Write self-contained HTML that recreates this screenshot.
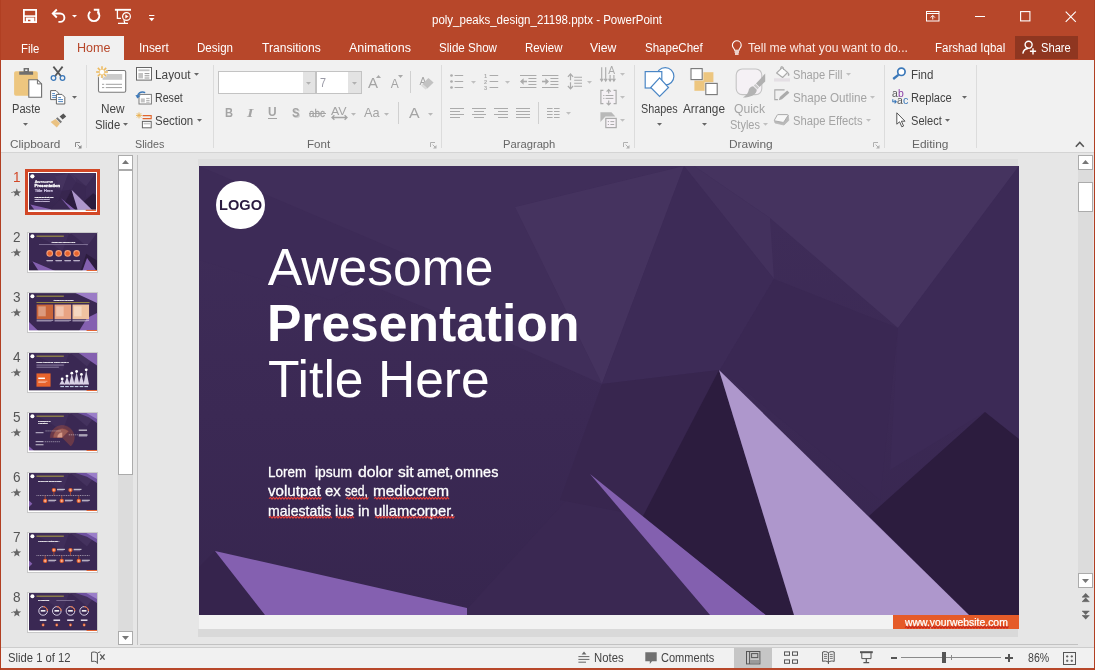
<!DOCTYPE html>
<html>
<head>
<meta charset="utf-8">
<title>PowerPoint</title>
<style>
*{box-sizing:border-box;margin:0;padding:0}
html,body{width:1095px;height:670px;overflow:hidden;background:#e6e6e6;font-family:"Liberation Sans",sans-serif;font-size:12px;color:#444}
#app{position:relative;width:1095px;height:670px;overflow:hidden;background:#e6e6e6;will-change:transform}
svg{display:block;overflow:visible}
</style>
</head>
<body>
<div id="app">
<!-- part_ribbon -->
<div style="position:absolute;left:0px;top:60px;width:1095px;height:92px;background:#f1f1f1;"></div>
<div style="position:absolute;left:0px;top:152px;width:1095px;height:1px;background:#d4d4d4;"></div>
<div style="position:absolute;left:86px;top:65px;width:1px;height:83px;background:#dcdcdc;"></div>
<div style="position:absolute;left:213px;top:65px;width:1px;height:83px;background:#dcdcdc;"></div>
<div style="position:absolute;left:441px;top:65px;width:1px;height:83px;background:#dcdcdc;"></div>
<div style="position:absolute;left:634px;top:65px;width:1px;height:83px;background:#dcdcdc;"></div>
<div style="position:absolute;left:884px;top:65px;width:1px;height:83px;background:#dcdcdc;"></div>
<div style="position:absolute;left:976px;top:65px;width:1px;height:83px;background:#dcdcdc;"></div>
<svg style="position:absolute;left:13px;top:66px;" width="31" height="33" viewBox="0 0 31 33"><rect x="1.1" y="5.3" width="23.7" height="24.5" rx="1.8" fill="#edc67f"/><path d="M6.2 8.8V5.6H10.6V2H16V5.6H20.1V8.8Z" fill="#6f6f6f"/><rect x="12.2" y="3.4" width="2.2" height="1.6" fill="#f1f1f1"/><path d="M15.8 13.7H24.4L28.6 17.9V31.2H15.8Z" fill="#fff" stroke="#6f6f6f" stroke-width="1.1"/><path d="M24.4 13.7V17.9H28.6" fill="none" stroke="#6f6f6f" stroke-width="1"/></svg>
<div style="position:absolute;left:12.20px;top:102.89px;font-size:12.3px;line-height:1;color:#444;white-space:nowrap;transform-origin:0 0;transform:scaleX(0.9029);">Paste</div>
<svg style="position:absolute;left:23.0px;top:123.3px;" width="5" height="2.8" viewBox="0 0 5 2.8"><path d="M0 0H5L2.5 2.8Z" fill="#666"/></svg>
<svg style="position:absolute;left:50px;top:66px;" width="16" height="15" viewBox="0 0 16 15"><path d="M3.4 0.6L11 10.2M12.6 0.6L5 10.2" stroke="#555" stroke-width="1.8" fill="none"/><circle cx="3.5" cy="12" r="2.3" fill="none" stroke="#3b78b9" stroke-width="1.3"/><circle cx="12.5" cy="12" r="2.3" fill="none" stroke="#3b78b9" stroke-width="1.3"/></svg>
<svg style="position:absolute;left:50px;top:89.5px;" width="16" height="15" viewBox="0 0 16 15"><path d="M0.6 0.6H6L8.6 3.2V9.6H0.6Z" fill="#fff" stroke="#666" stroke-width="1"/><path d="M2.2 3.6H5M2.2 5.6H6.6M2.2 7.6H6.6" stroke="#3b78b9" stroke-width="0.9"/><path d="M6.4 4.4H12L14.8 7.2V14H6.4Z" fill="#fff" stroke="#666" stroke-width="1"/><path d="M8.2 7.6H11M8.2 9.6H13M8.2 11.6H13" stroke="#3b78b9" stroke-width="0.9"/></svg>
<svg style="position:absolute;left:72.1px;top:96px;" width="5" height="2.8" viewBox="0 0 5 2.8"><path d="M0 0H5L2.5 2.8Z" fill="#666"/></svg>
<svg style="position:absolute;left:50px;top:112.5px;" width="17" height="15" viewBox="0 0 17 15"><path d="M9.6 3.6L13.4 0.4L16.2 3.4L12.6 6.4Z" fill="#555"/><path d="M7.4 4.2L12 8.8L10.4 10.2L6 5.6Z" fill="#777"/><path d="M5.6 6L10 10.6L6.8 14.4L0.6 9Z" fill="#eac282"/></svg>
<div style="position:absolute;left:10.40px;top:138.40px;font-size:11.7px;line-height:1;color:#666;white-space:nowrap;transform-origin:0 0;transform:scaleX(1.0064);">Clipboard</div>
<svg style="position:absolute;left:75.3px;top:141.5px;" width="7" height="7" viewBox="0 0 7 7"><path d="M0.5 5V0.5H5" fill="none" stroke="#8a8a8a" stroke-width="1"/><path d="M2.6 2.6L6 6" stroke="#8a8a8a" stroke-width="1"/><path d="M6.5 3V6.5H3Z" fill="#8a8a8a"/></svg>
<svg style="position:absolute;left:95px;top:65px;" width="32" height="29" viewBox="0 0 32 29"><rect x="3.5" y="5.5" width="27.2" height="21.8" rx="1.6" fill="#fff" stroke="#7a7a7a" stroke-width="1.1"/><rect x="7.6" y="9" width="19.6" height="5.8" fill="#cbcbcb"/><path d="M7 19.3H9.2M10.8 19.3H27M7 22.6H9.2M10.8 22.6H27" stroke="#a0a0a0" stroke-width="1"/><circle cx="7" cy="7.1" r="6.6" fill="#f1f1f1" opacity="0.0"/><g stroke="#f1f1f1" stroke-width="3.2"><path d="M7 1.2V13M1.1 7.1H12.9M2.8 2.9L11.2 11.3M11.2 2.9L2.8 11.3"/></g><g stroke="#edb95c" stroke-width="1.5"><path d="M7 1.2V13M1.1 7.1H12.9M2.8 2.9L11.2 11.3M11.2 2.9L2.8 11.3"/></g><circle cx="7" cy="7.1" r="2.3" fill="#fff"/></svg>
<div style="position:absolute;left:100.50px;top:102.89px;font-size:12.3px;line-height:1;color:#444;white-space:nowrap;transform-origin:0 0;transform:scaleX(0.9591);">New</div>
<div style="position:absolute;left:95.20px;top:118.89px;font-size:12.3px;line-height:1;color:#444;white-space:nowrap;transform-origin:0 0;transform:scaleX(0.9213);">Slide</div>
<svg style="position:absolute;left:123.1px;top:123.3px;" width="5" height="2.8" viewBox="0 0 5 2.8"><path d="M0 0H5L2.5 2.8Z" fill="#666"/></svg>
<svg style="position:absolute;left:136px;top:67px;" width="16" height="14" viewBox="0 0 16 14"><rect x="0.5" y="0.5" width="15" height="12.6" fill="#fff" stroke="#666" stroke-width="1"/><rect x="2.4" y="2.4" width="11.2" height="1.8" fill="#c2c2c2"/><rect x="2.4" y="6" width="4.6" height="5.4" fill="#c4c4c4"/><path d="M8.6 6.6H13.4M8.6 8.8H13.4M8.6 11H13.4" stroke="#888" stroke-width="0.9"/></svg>
<div style="position:absolute;left:155.30px;top:68.89px;font-size:12.3px;line-height:1;color:#444;white-space:nowrap;transform-origin:0 0;transform:scaleX(0.9640);">Layout</div>
<svg style="position:absolute;left:193.8px;top:73.2px;" width="5" height="2.8" viewBox="0 0 5 2.8"><path d="M0 0H5L2.5 2.8Z" fill="#666"/></svg>
<svg style="position:absolute;left:136px;top:89.5px;" width="16" height="15" viewBox="0 0 16 15"><rect x="3" y="4.4" width="12.4" height="9.6" fill="#fff" stroke="#7c7c7c" stroke-width="1"/><rect x="4.8" y="8.4" width="4" height="4" fill="#c4c4c4"/><path d="M10.2 8.4H13.6M10.2 10.4H13.6M10.2 12.2H13.6" stroke="#999" stroke-width="0.8"/><path d="M1.4 7.4C1.2 3.6 4.6 1 9.2 2.6" fill="none" stroke="#3b78b9" stroke-width="1.5"/><path d="M-0.6 5L1.6 8.6L4.6 5.6Z" fill="#3b78b9"/></svg>
<div style="position:absolute;left:155.30px;top:91.89px;font-size:12.3px;line-height:1;color:#444;white-space:nowrap;transform-origin:0 0;transform:scaleX(0.8652);">Reset</div>
<svg style="position:absolute;left:136px;top:111.5px;" width="17" height="17" viewBox="0 0 17 17"><g stroke="#eab04e" stroke-width="0.9"><path d="M3 0.4V6.4M0 3.4H6M0.9 1.3L5.1 5.5M5.1 1.3L0.9 5.5"/></g><path d="M6.6 3.6H15.2V6.6H6.6" fill="none" stroke="#e0662e" stroke-width="1.1"/><rect x="6.4" y="9.4" width="8.8" height="6.4" fill="#fff" stroke="#666" stroke-width="1"/><rect x="7.6" y="10.8" width="6.4" height="1.6" fill="#c8c8c8"/></svg>
<div style="position:absolute;left:155.30px;top:114.89px;font-size:12.3px;line-height:1;color:#444;white-space:nowrap;transform-origin:0 0;transform:scaleX(0.9311);">Section</div>
<svg style="position:absolute;left:196.8px;top:118.8px;" width="5" height="2.8" viewBox="0 0 5 2.8"><path d="M0 0H5L2.5 2.8Z" fill="#666"/></svg>
<div style="position:absolute;left:134.80px;top:138.40px;font-size:11.7px;line-height:1;color:#666;white-space:nowrap;transform-origin:0 0;transform:scaleX(0.9194);">Slides</div>
<div style="position:absolute;left:218px;top:71px;width:98px;height:23px;background:#fff;border:1px solid #c3c3c3;"></div>
<div style="position:absolute;left:302.5px;top:72px;width:12.5px;height:21px;background:#e3e3e3;"></div>
<svg style="position:absolute;left:306.1px;top:81.6px;" width="5" height="2.8" viewBox="0 0 5 2.8"><path d="M0 0H5L2.5 2.8Z" fill="#b0b0b0"/></svg>
<div style="position:absolute;left:316px;top:71px;width:46px;height:23px;background:#fff;border:1px solid #c3c3c3;"></div>
<div style="position:absolute;left:348px;top:72px;width:13px;height:21px;background:#e3e3e3;"></div>
<svg style="position:absolute;left:352.1px;top:81.6px;" width="5" height="2.8" viewBox="0 0 5 2.8"><path d="M0 0H5L2.5 2.8Z" fill="#b0b0b0"/></svg>
<div style="position:absolute;left:319.60px;top:76.89px;font-size:12.3px;line-height:1;color:#9a9aa6;white-space:nowrap;transform-origin:0 0;transform:scaleX(0.8771);">7</div>
<div style="position:absolute;left:368.20px;top:76.03px;font-size:14.5px;line-height:1;color:#a4a4a4;white-space:nowrap;transform-origin:0 0;transform:scaleX(1.0339);">A</div>
<svg style="position:absolute;left:375.8px;top:74.6px;" width="5" height="3" viewBox="0 0 5 3"><path d="M0 3H5L2.5 0Z" fill="#a9a9a9"/></svg>
<div style="position:absolute;left:390.80px;top:78.14px;font-size:12px;line-height:1;color:#a4a4a4;white-space:nowrap;transform-origin:0 0;">A</div>
<svg style="position:absolute;left:397.8px;top:74.8px;" width="5" height="3" viewBox="0 0 5 3"><path d="M0 0H5L2.5 3Z" fill="#a9a9a9"/></svg>
<div style="position:absolute;left:410px;top:71px;width:1px;height:22px;background:#d0d0d0;"></div>
<div style="position:absolute;left:419.40px;top:75.81px;font-size:10.5px;line-height:1;color:#a4a4a4;white-space:nowrap;transform-origin:0 0;">A</div>
<svg style="position:absolute;left:420px;top:77px;" width="15" height="13" viewBox="0 0 15 13"><path d="M8.4 1L13.6 5.4L7.4 11.6L2.4 7Z" fill="#c2c2c2"/><path d="M2.4 7L7.4 11.6L5.4 12.6L1 8.6Z" fill="#dadada"/></svg>
<div style="position:absolute;left:224.60px;top:106.63px;font-size:12.6px;line-height:1;color:#a4a4a4;white-space:nowrap;transform-origin:0 0;transform:scaleX(0.8792);font-weight:700;">B</div>
<div style="position:absolute;left:247.20px;top:105.96px;font-size:13.4px;line-height:1;color:#a4a4a4;white-space:nowrap;transform-origin:0 0;font-family:'Liberation Serif',serif;transform:scaleX(1.2274);font-weight:700;font-style:italic;">I</div>
<div style="position:absolute;left:268.20px;top:106.49px;font-size:12.3px;line-height:1;color:#a4a4a4;white-space:nowrap;transform-origin:0 0;transform:scaleX(0.9682);font-weight:700;">U</div>
<div style="position:absolute;left:268.2px;top:118px;width:8.6px;height:1px;background:#a4a4a4;"></div>
<div style="position:absolute;left:292.60px;top:107.63px;font-size:12.6px;line-height:1;color:#cfcfcf;white-space:nowrap;transform-origin:0 0;transform:scaleX(0.8805);font-weight:700;">S</div>
<div style="position:absolute;left:291.60px;top:106.63px;font-size:12.6px;line-height:1;color:#a4a4a4;white-space:nowrap;transform-origin:0 0;transform:scaleX(0.8805);font-weight:700;">S</div>
<div style="position:absolute;left:309.20px;top:108.33px;font-size:10.6px;line-height:1;color:#a4a4a4;white-space:nowrap;transform-origin:0 0;transform:scaleX(0.9362);-webkit-text-stroke:0.3px #a4a4a4;">abc</div>
<div style="position:absolute;left:308.6px;top:113.2px;width:17.2px;height:1px;background:#a4a4a4;"></div>
<div style="position:absolute;left:331.40px;top:105.76px;font-size:10.8px;line-height:1;color:#a4a4a4;white-space:nowrap;transform-origin:0 0;transform:scaleX(1.1465);">AV</div>
<svg style="position:absolute;left:331px;top:115.4px;" width="17" height="5" viewBox="0 0 17 5"><path d="M1 2.5H16M3.4 0.3L1 2.5L3.4 4.7M13.6 0.3L16 2.5L13.6 4.7" fill="none" stroke="#a4a4a4" stroke-width="1.3"/></svg>
<svg style="position:absolute;left:350.9px;top:113px;" width="5" height="2.8" viewBox="0 0 5 2.8"><path d="M0 0H5L2.5 2.8Z" fill="#b8b8b8"/></svg>
<div style="position:absolute;left:364.00px;top:106.63px;font-size:12.6px;line-height:1;color:#a4a4a4;white-space:nowrap;transform-origin:0 0;transform:scaleX(1.0122);">Aa</div>
<svg style="position:absolute;left:383.5px;top:113px;" width="5" height="2.8" viewBox="0 0 5 2.8"><path d="M0 0H5L2.5 2.8Z" fill="#b8b8b8"/></svg>
<div style="position:absolute;left:398.3px;top:102px;width:1px;height:22px;background:#d0d0d0;"></div>
<div style="position:absolute;left:408.80px;top:105.77px;font-size:14.8px;line-height:1;color:#a4a4a4;white-space:nowrap;transform-origin:0 0;transform:scaleX(1.0737);">A</div>
<svg style="position:absolute;left:427.9px;top:113px;" width="5" height="2.8" viewBox="0 0 5 2.8"><path d="M0 0H5L2.5 2.8Z" fill="#b8b8b8"/></svg>
<div style="position:absolute;left:306.80px;top:138.40px;font-size:11.7px;line-height:1;color:#666;white-space:nowrap;transform-origin:0 0;transform:scaleX(0.9909);">Font</div>
<svg style="position:absolute;left:430px;top:141.5px;" width="7" height="7" viewBox="0 0 7 7"><path d="M0.5 5V0.5H5" fill="none" stroke="#b0b0b0" stroke-width="1"/><path d="M2.6 2.6L6 6" stroke="#b0b0b0" stroke-width="1"/><path d="M6.5 3V6.5H3Z" fill="#b0b0b0"/></svg>
<svg style="position:absolute;left:450px;top:74px;" width="14" height="16" viewBox="0 0 14 16"><circle cx="1.5" cy="1.5" r="1.35" fill="#ababab"/><path d="M4.6 1.5H13.2" stroke="#ababab" stroke-width="1"/><circle cx="1.5" cy="7.5" r="1.35" fill="#ababab"/><path d="M4.6 7.5H13.2" stroke="#ababab" stroke-width="1"/><circle cx="1.5" cy="13.5" r="1.35" fill="#ababab"/><path d="M4.6 13.5H13.2" stroke="#ababab" stroke-width="1"/></svg>
<svg style="position:absolute;left:470.9px;top:81.2px;" width="5" height="2.8" viewBox="0 0 5 2.8"><path d="M0 0H5L2.5 2.8Z" fill="#c0c0c0"/></svg>
<svg style="position:absolute;left:483.7px;top:74px;" width="15" height="16" viewBox="0 0 15 16"><text x="0" y="3.6" font-size="5.6" font-family="Liberation Sans" fill="#ababab" font-weight="700">1</text><path d="M5.6 1.5H14.2" stroke="#ababab" stroke-width="1"/><text x="0" y="9.6" font-size="5.6" font-family="Liberation Sans" fill="#ababab" font-weight="700">2</text><path d="M5.6 7.5H14.2" stroke="#ababab" stroke-width="1"/><text x="0" y="15.6" font-size="5.6" font-family="Liberation Sans" fill="#ababab" font-weight="700">3</text><path d="M5.6 13.5H14.2" stroke="#ababab" stroke-width="1"/></svg>
<svg style="position:absolute;left:505.0px;top:81.2px;" width="5" height="2.8" viewBox="0 0 5 2.8"><path d="M0 0H5L2.5 2.8Z" fill="#c0c0c0"/></svg>
<svg style="position:absolute;left:519.8px;top:75px;" width="17" height="14" viewBox="0 0 17 14"><path d="M0 0.5H16.4M0 12.5H16.4" stroke="#ababab" stroke-width="1"/><path d="M8.4 3.5H16.4M8.4 6.5H16.4M8.4 9.5H16.4" stroke="#ababab" stroke-width="1"/><path d="M1 6.5H7" stroke="#ababab" stroke-width="1.6"/><path d="M0 6.5L3.6 3.2V9.8Z" fill="#ababab"/></svg>
<svg style="position:absolute;left:541.7px;top:75px;" width="17" height="14" viewBox="0 0 17 14"><path d="M0 0.5H16.4M0 12.5H16.4" stroke="#ababab" stroke-width="1"/><path d="M8.4 3.5H16.4M8.4 6.5H16.4M8.4 9.5H16.4" stroke="#ababab" stroke-width="1"/><path d="M0 6.5H6" stroke="#ababab" stroke-width="1.6"/><path d="M7 6.5L3.4 3.2V9.8Z" fill="#ababab"/></svg>
<svg style="position:absolute;left:567px;top:73.3px;" width="16" height="17" viewBox="0 0 16 17"><path d="M3.5 1V7.2M3.5 9.2V15.8M0.9 3.8L3.5 1L6.1 3.8M0.9 13L3.5 15.8L6.1 13" fill="none" stroke="#ababab" stroke-width="1.2"/><path d="M7.2 4.2H15M7.2 7.2H15M7.2 10.2H15M7.2 13.2H15" stroke="#ababab" stroke-width="1.1"/></svg>
<svg style="position:absolute;left:587.1px;top:81.2px;" width="5" height="2.8" viewBox="0 0 5 2.8"><path d="M0 0H5L2.5 2.8Z" fill="#c0c0c0"/></svg>
<svg style="position:absolute;left:599.6px;top:66px;" width="17" height="16" viewBox="0 0 17 16"><path d="M1.7 1.2V15M5.7 1.2V15M0.2 12.8L1.7 15.2L3.2 12.8M4.2 12.8L5.7 15.2L7.2 12.8" fill="none" stroke="#ababab" stroke-width="1.1"/><path d="M10.1 9V15M13.9 9V15M8.6 12.8L10.1 15.2L11.6 12.8M12.4 12.8L13.9 15.2L15.4 12.8" fill="none" stroke="#ababab" stroke-width="1.1"/><text x="8.2" y="7.8" font-size="10.2" font-family="Liberation Sans" fill="#ababab">A</text></svg>
<svg style="position:absolute;left:620.1px;top:73px;" width="5" height="2.8" viewBox="0 0 5 2.8"><path d="M0 0H5L2.5 2.8Z" fill="#c0c0c0"/></svg>
<svg style="position:absolute;left:599.6px;top:89px;" width="17" height="16" viewBox="0 0 17 16"><rect x="1.2" y="1.6" width="14.4" height="13" fill="#f5f1f5"/><path d="M3.4 1.4H0.9V14.6H3.4M13.6 1.4H16.1V14.6H13.6" fill="none" stroke="#ababab" stroke-width="1.2"/><path d="M8.7 0.6V4.6M6.6 2.6L8.7 0.5L10.8 2.6M8.7 15.8V11.6M6.6 13.8L8.7 15.9L10.8 13.8" fill="none" stroke="#ababab" stroke-width="1.2"/><path d="M3.2 6.5H4.4M5.6 6.5H13.4M3.2 9.4H4.4M5.6 9.4H13.4" stroke="#ababab" stroke-width="1"/></svg>
<svg style="position:absolute;left:620.1px;top:96.4px;" width="5" height="2.8" viewBox="0 0 5 2.8"><path d="M0 0H5L2.5 2.8Z" fill="#c0c0c0"/></svg>
<svg style="position:absolute;left:599.6px;top:112px;" width="17" height="16" viewBox="0 0 17 16"><path d="M0.4 0.2H11.4L15.4 4.4H5.4L0.4 10Z" fill="#b9b9b9"/><rect x="5.8" y="6.4" width="10.4" height="9.2" fill="#f6f1f6" stroke="#ababab" stroke-width="1.2"/><path d="M7.8 9.6H9M10.4 9.6H14.2M7.8 12.5H9M10.4 12.5H14.2" stroke="#ababab" stroke-width="1"/></svg>
<svg style="position:absolute;left:620.1px;top:119px;" width="5" height="2.8" viewBox="0 0 5 2.8"><path d="M0 0H5L2.5 2.8Z" fill="#c0c0c0"/></svg>
<svg style="position:absolute;left:450px;top:108px;" width="20" height="13.0" viewBox="0 0 20 13.0"><path d="M0 0.50H14" stroke="#ababab" stroke-width="1"/><path d="M0 3.50H10" stroke="#ababab" stroke-width="1"/><path d="M0 6.50H14" stroke="#ababab" stroke-width="1"/><path d="M0 9.50H10" stroke="#ababab" stroke-width="1"/></svg>
<svg style="position:absolute;left:472px;top:108px;" width="20" height="13.0" viewBox="0 0 20 13.0"><path d="M0 0.50H14" stroke="#ababab" stroke-width="1"/><path d="M2 3.50H12" stroke="#ababab" stroke-width="1"/><path d="M0 6.50H14" stroke="#ababab" stroke-width="1"/><path d="M2 9.50H12" stroke="#ababab" stroke-width="1"/></svg>
<svg style="position:absolute;left:494px;top:108px;" width="20" height="13.0" viewBox="0 0 20 13.0"><path d="M0 0.50H14" stroke="#ababab" stroke-width="1"/><path d="M4 3.50H14" stroke="#ababab" stroke-width="1"/><path d="M0 6.50H14" stroke="#ababab" stroke-width="1"/><path d="M4 9.50H14" stroke="#ababab" stroke-width="1"/></svg>
<svg style="position:absolute;left:516px;top:108px;" width="20" height="13.0" viewBox="0 0 20 13.0"><path d="M0 0.50H14" stroke="#ababab" stroke-width="1"/><path d="M0 3.50H14" stroke="#ababab" stroke-width="1"/><path d="M0 6.50H14" stroke="#ababab" stroke-width="1"/><path d="M0 9.50H14" stroke="#ababab" stroke-width="1"/></svg>
<div style="position:absolute;left:538.4px;top:102px;width:1px;height:22px;background:#d0d0d0;"></div>
<svg style="position:absolute;left:546.8px;top:108px;" width="20" height="13.0" viewBox="0 0 20 13.0"><path d="M0 0.50H5.6" stroke="#ababab" stroke-width="1"/><path d="M0 3.50H5.6" stroke="#ababab" stroke-width="1"/><path d="M0 6.50H5.6" stroke="#ababab" stroke-width="1"/><path d="M0 9.50H5.6" stroke="#ababab" stroke-width="1"/></svg>
<svg style="position:absolute;left:554.4px;top:108px;" width="20" height="13.0" viewBox="0 0 20 13.0"><path d="M0 0.50H5.6" stroke="#ababab" stroke-width="1"/><path d="M0 3.50H5.6" stroke="#ababab" stroke-width="1"/><path d="M0 6.50H5.6" stroke="#ababab" stroke-width="1"/><path d="M0 9.50H5.6" stroke="#ababab" stroke-width="1"/></svg>
<svg style="position:absolute;left:565.9px;top:112.4px;" width="5" height="2.8" viewBox="0 0 5 2.8"><path d="M0 0H5L2.5 2.8Z" fill="#c0c0c0"/></svg>
<div style="position:absolute;left:503.40px;top:138.40px;font-size:11.7px;line-height:1;color:#666;white-space:nowrap;transform-origin:0 0;transform:scaleX(0.9590);">Paragraph</div>
<svg style="position:absolute;left:622.8px;top:141.5px;" width="7" height="7" viewBox="0 0 7 7"><path d="M0.5 5V0.5H5" fill="none" stroke="#b0b0b0" stroke-width="1"/><path d="M2.6 2.6L6 6" stroke="#b0b0b0" stroke-width="1"/><path d="M6.5 3V6.5H3Z" fill="#b0b0b0"/></svg>
<svg style="position:absolute;left:644px;top:66px;" width="31" height="32" viewBox="0 0 31 32"><circle cx="21.2" cy="10.3" r="8.7" fill="#fff" stroke="#4a86c5" stroke-width="1.2"/><rect x="1.2" y="5.6" width="16.6" height="16.4" fill="#fff" stroke="#4a86c5" stroke-width="1.2"/><path d="M15.6 11.9L24.5 21.5L15.6 30.5L6.7 21.5Z" fill="#fff" stroke="#4a86c5" stroke-width="1.2"/></svg>
<div style="position:absolute;left:641.00px;top:102.89px;font-size:12.3px;line-height:1;color:#444;white-space:nowrap;transform-origin:0 0;transform:scaleX(0.8773);">Shapes</div>
<svg style="position:absolute;left:656.5px;top:123.3px;" width="5" height="2.8" viewBox="0 0 5 2.8"><path d="M0 0H5L2.5 2.8Z" fill="#666"/></svg>
<svg style="position:absolute;left:689.6px;top:68px;" width="28" height="28" viewBox="0 0 28 28"><rect x="4.4" y="4.2" width="19" height="18.6" fill="#edc67f"/><rect x="-0.2" y="-0.6" width="13.6" height="13.2" fill="#f1f1f1"/><rect x="14.6" y="14.2" width="14" height="13.6" fill="#f1f1f1"/><rect x="1" y="0.6" width="11.2" height="11" fill="#fff" stroke="#777" stroke-width="1.1"/><rect x="15.8" y="15.4" width="11.4" height="11.2" fill="#fff" stroke="#777" stroke-width="1.1"/></svg>
<div style="position:absolute;left:683.20px;top:102.89px;font-size:12.3px;line-height:1;color:#444;white-space:nowrap;transform-origin:0 0;transform:scaleX(0.9598);">Arrange</div>
<svg style="position:absolute;left:701.8px;top:123.3px;" width="5" height="2.8" viewBox="0 0 5 2.8"><path d="M0 0H5L2.5 2.8Z" fill="#666"/></svg>
<svg style="position:absolute;left:735px;top:68.4px;" width="31" height="30" viewBox="0 0 31 30"><rect x="1.2" y="1" width="25.6" height="25.6" rx="6" fill="#f5f1f5" stroke="#c4c4c4" stroke-width="1.1"/><path d="M30.2 5.6V13.4L24.6 19L21 15.4Z" fill="#b0b0b0"/><path d="M20.4 16L24 19.6L22.4 21.2L18.8 17.6Z" fill="#c9c9c9"/><path d="M18.2 18.2L21.8 21.8C21.6 26.4 16 29.6 7.8 29.6C12.4 27 13.4 24 14 21C15 19.4 16.6 18.4 18.2 18.2Z" fill="#b3b3b3"/></svg>
<div style="position:absolute;left:734.40px;top:102.89px;font-size:12.3px;line-height:1;color:#a4a4a4;white-space:nowrap;transform-origin:0 0;transform:scaleX(0.9860);">Quick</div>
<div style="position:absolute;left:730.20px;top:118.89px;font-size:12.3px;line-height:1;color:#a4a4a4;white-space:nowrap;transform-origin:0 0;transform:scaleX(0.8956);">Styles</div>
<svg style="position:absolute;left:763.1px;top:123.3px;" width="5" height="2.8" viewBox="0 0 5 2.8"><path d="M0 0H5L2.5 2.8Z" fill="#c0c0c0"/></svg>
<svg style="position:absolute;left:774px;top:66px;" width="16" height="16" viewBox="0 0 16 16"><path d="M8.1 1.6L13.6 6.5L8.6 11.5L2.6 7Z" fill="#fafafa" stroke="#ababab" stroke-width="1.1" stroke-linejoin="round"/><path d="M6.5 3.6L7 0.7L9.1 1L9.7 4" fill="none" stroke="#ababab" stroke-width="1"/><path d="M14.2 6.2C15.4 7.8 16 9 15 9.8C14 10.4 13.2 9.2 14.2 6.2Z" fill="#ababab"/><rect x="0" y="12.3" width="16" height="3.3" fill="#e4dfe4"/></svg>
<div style="position:absolute;left:793.20px;top:68.89px;font-size:12.3px;line-height:1;color:#a4a4a4;white-space:nowrap;transform-origin:0 0;transform:scaleX(0.9031);">Shape Fill</div>
<svg style="position:absolute;left:846.0px;top:73.2px;" width="5" height="2.8" viewBox="0 0 5 2.8"><path d="M0 0H5L2.5 2.8Z" fill="#c0c0c0"/></svg>
<svg style="position:absolute;left:774px;top:89px;" width="16" height="15" viewBox="0 0 16 15"><path d="M10.6 0.9H0.8V10.6H3.9" fill="none" stroke="#ababab" stroke-width="1.1"/><path d="M13.2 1.6L15.4 3.8L8 10.2L4.8 11.2L5.8 8Z" fill="#ababab"/></svg>
<div style="position:absolute;left:793.20px;top:91.89px;font-size:12.3px;line-height:1;color:#a4a4a4;white-space:nowrap;transform-origin:0 0;transform:scaleX(0.9492);">Shape Outline</div>
<svg style="position:absolute;left:870.3px;top:96px;" width="5" height="2.8" viewBox="0 0 5 2.8"><path d="M0 0H5L2.5 2.8Z" fill="#c0c0c0"/></svg>
<svg style="position:absolute;left:774px;top:112px;" width="16" height="15" viewBox="0 0 16 15"><path d="M0.4 8.6L9.6 10.4L14.2 3.2L14.8 8.4L10 13L1 11Z" fill="#b9b9b9" stroke="#b9b9b9" stroke-width="0.8" stroke-linejoin="round"/><path d="M4 2.6H13.4C14 2.6 14.3 3 14 3.6L9.9 10C9.6 10.4 9.2 10.5 8.8 10.4L0.9 8.9C0.3 8.8 0.2 8.4 0.5 7.9L3.2 3.1C3.4 2.8 3.6 2.6 4 2.6Z" fill="#f7f7f7" stroke="#ababab" stroke-width="1"/></svg>
<div style="position:absolute;left:793.20px;top:114.89px;font-size:12.3px;line-height:1;color:#a4a4a4;white-space:nowrap;transform-origin:0 0;transform:scaleX(0.9115);">Shape Effects</div>
<svg style="position:absolute;left:865.5px;top:118.8px;" width="5" height="2.8" viewBox="0 0 5 2.8"><path d="M0 0H5L2.5 2.8Z" fill="#c0c0c0"/></svg>
<div style="position:absolute;left:728.80px;top:138.40px;font-size:11.7px;line-height:1;color:#666;white-space:nowrap;transform-origin:0 0;transform:scaleX(1.0206);">Drawing</div>
<svg style="position:absolute;left:873px;top:141.5px;" width="7" height="7" viewBox="0 0 7 7"><path d="M0.5 5V0.5H5" fill="none" stroke="#b0b0b0" stroke-width="1"/><path d="M2.6 2.6L6 6" stroke="#b0b0b0" stroke-width="1"/><path d="M6.5 3V6.5H3Z" fill="#b0b0b0"/></svg>
<svg style="position:absolute;left:892.4px;top:67.4px;" width="14" height="13" viewBox="0 0 14 13"><circle cx="9.4" cy="4.8" r="3.7" fill="#fff" stroke="#3b78b9" stroke-width="1.7"/><path d="M6.4 7.8L1.2 12" stroke="#3b78b9" stroke-width="2.3"/></svg>
<div style="position:absolute;left:911.20px;top:68.89px;font-size:12.3px;line-height:1;color:#444;white-space:nowrap;transform-origin:0 0;transform:scaleX(0.9361);">Find</div>
<div style="position:absolute;left:891.60px;top:88.33px;font-size:10.6px;line-height:1;color:#555;white-space:nowrap;transform-origin:0 0;transform:scaleX(0.9838);">a</div>
<div style="position:absolute;left:897.60px;top:88.33px;font-size:10.6px;line-height:1;color:#8b3fa6;white-space:nowrap;transform-origin:0 0;transform:scaleX(0.9838);">b</div>
<div style="position:absolute;left:896.60px;top:95.33px;font-size:10.6px;line-height:1;color:#555;white-space:nowrap;transform-origin:0 0;transform:scaleX(0.9838);">a</div>
<div style="position:absolute;left:902.80px;top:95.33px;font-size:10.6px;line-height:1;color:#3b78b9;white-space:nowrap;transform-origin:0 0;transform:scaleX(1.0189);">c</div>
<svg style="position:absolute;left:891.8px;top:98.8px;" width="5" height="5" viewBox="0 0 5 5"><path d="M0.8 0.2V2.8H4M2.6 1.2L4.2 2.8L2.6 4.4" fill="none" stroke="#3b78b9" stroke-width="1.1"/></svg>
<div style="position:absolute;left:911.20px;top:91.89px;font-size:12.3px;line-height:1;color:#444;white-space:nowrap;transform-origin:0 0;transform:scaleX(0.9041);">Replace</div>
<svg style="position:absolute;left:961.9px;top:96px;" width="5" height="2.8" viewBox="0 0 5 2.8"><path d="M0 0H5L2.5 2.8Z" fill="#666"/></svg>
<svg style="position:absolute;left:895.6px;top:111.6px;" width="10" height="16" viewBox="0 0 10 16"><path d="M0.8 0.8V12.2L3.6 9.8L5.8 14.8L7.6 14L5.4 9.2H9Z" fill="#fff" stroke="#555" stroke-width="1" stroke-linejoin="round"/></svg>
<div style="position:absolute;left:911.20px;top:114.89px;font-size:12.3px;line-height:1;color:#444;white-space:nowrap;transform-origin:0 0;transform:scaleX(0.9009);">Select</div>
<svg style="position:absolute;left:945.1px;top:118.8px;" width="5" height="2.8" viewBox="0 0 5 2.8"><path d="M0 0H5L2.5 2.8Z" fill="#666"/></svg>
<div style="position:absolute;left:912.40px;top:138.40px;font-size:11.7px;line-height:1;color:#666;white-space:nowrap;transform-origin:0 0;transform:scaleX(1.0175);">Editing</div>
<svg style="position:absolute;left:1075px;top:141px;" width="10" height="7" viewBox="0 0 10 7"><path d="M0.8 5.8L4.8 1.4L8.8 5.8" fill="none" stroke="#555" stroke-width="1.5"/></svg>
<!-- part_left -->
<div style="position:absolute;left:25px;top:169px;width:75px;height:46px;background:#fff;border:3px solid #d24726;"></div>
<svg style="position:absolute;left:29px;top:173px;overflow:hidden;" width="67" height="38" viewBox="0 0 820 463"><defs><linearGradient id="bgg1" x1="0" y1="0" x2="0" y2="1"><stop offset="0" stop-color="#3f2d59"/><stop offset="0.55" stop-color="#3b2954"/><stop offset="1" stop-color="#37264f"/></linearGradient></defs><rect x="0" y="0" width="820" height="449" fill="url(#bgg1)"/><polygon points="495.0,0.0 571.0,52.0 699.0,162.0 820.0,0.0" fill="#45335f"/><polygon points="485.0,0.0 495.0,0.0 571.0,52.0 575.0,113.0" fill="#43315d"/><polygon points="0.0,0.0 485.0,0.0 316.0,41.0 403.0,218.0 281.0,164.0 0.0,49.0" fill="#402e5a"/><polygon points="316.0,41.0 485.0,0.0 403.0,218.0" fill="#45335f"/><polygon points="485.0,0.0 575.0,113.0 521.0,204.0 403.0,218.0" fill="#3d2b57"/><polygon points="699.0,162.0 820.0,0.0 820.0,274.0 786.0,246.0 691.0,304.0" fill="#3c2a56"/><polygon points="575.0,113.0 699.0,162.0 681.0,334.0 521.0,204.0" fill="#3a2853"/><polygon points="0.0,0.0 221.0,94.0 131.0,134.0 0.0,94.0" fill="#3d2b57"/><polygon points="391.0,308.0 268.0,443.0 262.0,449.0 511.0,449.0" fill="#3a2852"/><polygon points="520.0,204.0 403.0,218.0 361.0,334.0 444.0,350.0" fill="#38264f"/><polygon points="0.0,401.0 16.0,385.0 66.0,449.0 0.0,449.0" fill="#36244d"/><polygon points="16.0,385.0 66.0,449.0 268.0,449.0 268.0,442.0" fill="#8460b0"/><polygon points="391.0,308.0 511.0,449.0 567.0,449.0" fill="#8360af"/><polygon points="520.0,204.0 444.0,350.0 567.0,449.0 595.0,449.0" fill="#2c1c3e"/><polygon points="786.0,246.0 820.0,273.0 820.0,449.0 770.0,449.0 670.0,350.0" fill="#2c1c3e"/><polygon points="520.0,204.0 595.0,449.0 770.0,449.0" fill="#ae97cc"/><rect x="0" y="449" width="820" height="14" fill="#f2f2f2"/><rect x="694" y="449" width="126" height="14" fill="#e55b28"/><circle cx="41" cy="39" r="26" fill="#fff"/><g font-family="Liberation Sans" fill="#fff" stroke="#fff" stroke-width="2.2"><text x="69" y="119" font-size="52">Awesome</text><text x="68" y="175" font-size="52" font-weight="700" stroke-width="4">Presentation</text><text x="69" y="230" font-size="52" fill="#e9e2f6" stroke="#d9cdf0">Title Here</text></g><g font-family="Liberation Sans" fill="#fff" stroke="#fff" stroke-width="2.5"><text x="69" y="311" font-size="15" textLength="230">Lorem ipsum dolor sit amet, omnes</text><text x="69" y="331" font-size="15" fill="#cfc4e0" stroke="#cfc4e0" textLength="181">volutpat ex sed, mediocrem</text><text x="69" y="350" font-size="15" fill="#cfc4e0" stroke="#cfc4e0" textLength="186">maiestatis ius in ullamcorper.</text></g></svg>
<div style="position:absolute;left:13.45px;top:170.14px;font-size:14.6px;line-height:1;color:#d24726;white-space:nowrap;transform-origin:0 0;transform:scaleX(0.9300);">1</div>
<svg style="position:absolute;left:11.8px;top:187.9px;" width="10" height="10" viewBox="0 0 10 10"><polygon points="4.80,0.20 5.92,3.26 9.17,3.38 6.61,5.39 7.50,8.52 4.80,6.70 2.10,8.52 2.99,5.39 0.43,3.38 3.68,3.26" fill="#666"/></svg><div style="position:absolute;left:11.0px;top:191.5px;width:1.6px;height:1px;background:#9a9a9a;"></div>
<div style="position:absolute;left:27px;top:231.5px;width:71px;height:41.5px;background:#fff;border:1px solid #c8c8c8;"></div>
<svg style="position:absolute;left:28.5px;top:232.7px;overflow:hidden;" width="68" height="38.6" viewBox="0 0 820 463"><rect width="820" height="463" fill="#3a2853"/><polygon points="495,0 571,52 699,162 820,0" fill="#44325e"/><polygon points="0,0 485,0 403,218 221,94" fill="#402e5a"/><polygon points="0,380 60,330 200,463 0,463" fill="#33224a"/><polygon points="40,340 120,463 330,463" fill="#8460b0"/><polygon points="690,250 820,330 820,463 620,463" fill="#2c1c3e"/><polygon points="700,300 820,463 640,463" fill="#8460b0"/><circle cx="41" cy="39" r="24" fill="#fff"/><rect x="90" y="32" width="330" height="9" fill="#d2c936"/><text x="415" y="116" font-size="27" font-weight="700" font-family="Liberation Sans" fill="#fff" stroke="#fff" stroke-width="1.6" text-anchor="middle">Awesome Needle Here</text><rect x="120" y="135" width="590" height="8" fill="#9a8db0"/><circle cx="250" cy="245" r="40" fill="#f4a07a"/><circle cx="250" cy="245" r="27" fill="#e8632c"/><rect x="210" y="325" width="80" height="9" fill="#e6e0ee"/><rect x="214" y="343" width="72" height="6" fill="#9a8db0"/><circle cx="358" cy="245" r="40" fill="#f4a07a"/><circle cx="358" cy="245" r="27" fill="#e8632c"/><rect x="318" y="325" width="80" height="9" fill="#e6e0ee"/><rect x="322" y="343" width="72" height="6" fill="#9a8db0"/><circle cx="466" cy="245" r="40" fill="#f4a07a"/><circle cx="466" cy="245" r="27" fill="#e8632c"/><rect x="426" y="325" width="80" height="9" fill="#e6e0ee"/><rect x="430" y="343" width="72" height="6" fill="#9a8db0"/><circle cx="574" cy="245" r="40" fill="#f4a07a"/><circle cx="574" cy="245" r="27" fill="#e8632c"/><rect x="534" y="325" width="80" height="9" fill="#e6e0ee"/><rect x="538" y="343" width="72" height="6" fill="#9a8db0"/><rect x="0" y="449" width="820" height="14" fill="#f2f2f2"/><rect x="694" y="446" width="126" height="17" fill="#e55b28"/></svg>
<div style="position:absolute;left:13.45px;top:230.14px;font-size:14.6px;line-height:1;color:#555;white-space:nowrap;transform-origin:0 0;transform:scaleX(0.9300);">2</div>
<svg style="position:absolute;left:11.8px;top:247.9px;" width="10" height="10" viewBox="0 0 10 10"><polygon points="4.80,0.20 5.92,3.26 9.17,3.38 6.61,5.39 7.50,8.52 4.80,6.70 2.10,8.52 2.99,5.39 0.43,3.38 3.68,3.26" fill="#666"/></svg><div style="position:absolute;left:11.0px;top:251.5px;width:1.6px;height:1px;background:#9a9a9a;"></div>
<div style="position:absolute;left:27px;top:291.5px;width:71px;height:41.5px;background:#fff;border:1px solid #c8c8c8;"></div>
<svg style="position:absolute;left:28.5px;top:292.7px;overflow:hidden;" width="68" height="38.6" viewBox="0 0 820 463"><rect width="820" height="463" fill="#3a2853"/><polygon points="560,0 820,0 820,120" fill="#9b7cc6"/><polygon points="700,300 820,240 820,463 600,463" fill="#8460b0"/><polygon points="0,350 120,463 0,463" fill="#8460b0"/><circle cx="41" cy="39" r="24" fill="#fff"/><rect x="90" y="32" width="330" height="9" fill="#d2c936"/><text x="415" y="96" font-size="27" font-weight="700" font-family="Liberation Sans" fill="#fff" stroke="#fff" stroke-width="1.6" text-anchor="middle">Awesome Services</text><rect x="90" y="112" width="640" height="7" fill="#d2c936"/><rect x="92" y="138" width="200" height="175" fill="#c9653a"/><rect x="112" y="160" width="90" height="120" fill="#fff" opacity="0.35"/><rect x="92" y="322" width="200" height="9" fill="#e6e0ee"/><rect x="92" y="340" width="180" height="6" fill="#9a8db0"/><rect x="308" y="138" width="200" height="175" fill="#e9a383"/><rect x="328" y="160" width="90" height="120" fill="#fff" opacity="0.35"/><rect x="308" y="322" width="200" height="9" fill="#e6e0ee"/><rect x="308" y="340" width="180" height="6" fill="#9a8db0"/><rect x="524" y="138" width="200" height="175" fill="#efc2a0"/><rect x="544" y="160" width="90" height="120" fill="#fff" opacity="0.35"/><rect x="524" y="322" width="200" height="9" fill="#e6e0ee"/><rect x="524" y="340" width="180" height="6" fill="#9a8db0"/><rect x="0" y="449" width="820" height="14" fill="#f2f2f2"/><rect x="694" y="446" width="126" height="17" fill="#e55b28"/></svg>
<div style="position:absolute;left:13.45px;top:290.14px;font-size:14.6px;line-height:1;color:#555;white-space:nowrap;transform-origin:0 0;transform:scaleX(0.9300);">3</div>
<svg style="position:absolute;left:11.8px;top:307.9px;" width="10" height="10" viewBox="0 0 10 10"><polygon points="4.80,0.20 5.92,3.26 9.17,3.38 6.61,5.39 7.50,8.52 4.80,6.70 2.10,8.52 2.99,5.39 0.43,3.38 3.68,3.26" fill="#666"/></svg><div style="position:absolute;left:11.0px;top:311.5px;width:1.6px;height:1px;background:#9a9a9a;"></div>
<div style="position:absolute;left:27px;top:351.5px;width:71px;height:41.5px;background:#fff;border:1px solid #c8c8c8;"></div>
<svg style="position:absolute;left:28.5px;top:352.7px;overflow:hidden;" width="68" height="38.6" viewBox="0 0 820 463"><rect width="820" height="463" fill="#3a2853"/><polygon points="495,0 571,52 699,162 820,0" fill="#44325e"/><polygon points="0,0 485,0 403,218 221,94" fill="#402e5a"/><polygon points="600,0 820,0 820,150" fill="#8460b0"/><circle cx="41" cy="39" r="24" fill="#fff"/><rect x="90" y="32" width="330" height="9" fill="#d2c936"/><text x="90" y="116" font-size="27" font-weight="700" font-family="Liberation Sans" fill="#fff" stroke="#fff" stroke-width="1.6" text-anchor="start">Some Awesome Place Goes In</text><rect x="90" y="140" width="330" height="8" fill="#b8accb"/><rect x="90" y="165" width="270" height="8" fill="#b8accb"/><rect x="90" y="245" width="170" height="160" fill="#e8632c"/><rect x="112" y="295" width="80" height="18" fill="#fff"/><rect x="112" y="335" width="110" height="7" fill="#ffd9c8"/><rect x="112" y="352" width="90" height="7" fill="#ffd9c8"/><polygon points="366,380 400,320 434,380" fill="#d9d2e6"/><circle cx="400" cy="312" r="17" fill="#fff"/><rect x="378" y="398" width="44" height="12" fill="#cfe3f7"/><polygon points="424,380 458,285 492,380" fill="#d9d2e6"/><circle cx="458" cy="277" r="17" fill="#fff"/><rect x="436" y="398" width="44" height="12" fill="#cfe3f7"/><polygon points="482,380 516,250 550,380" fill="#d9d2e6"/><circle cx="516" cy="242" r="17" fill="#fff"/><rect x="494" y="398" width="44" height="12" fill="#cfe3f7"/><polygon points="540,380 574,230 608,380" fill="#d9d2e6"/><circle cx="574" cy="222" r="17" fill="#fff"/><rect x="552" y="398" width="44" height="12" fill="#cfe3f7"/><polygon points="598,380 632,265 666,380" fill="#d9d2e6"/><circle cx="632" cy="257" r="17" fill="#fff"/><rect x="610" y="398" width="44" height="12" fill="#cfe3f7"/><polygon points="656,380 690,210 724,380" fill="#d9d2e6"/><circle cx="690" cy="202" r="17" fill="#fff"/><rect x="668" y="398" width="44" height="12" fill="#cfe3f7"/><rect x="0" y="449" width="820" height="14" fill="#f2f2f2"/><rect x="694" y="446" width="126" height="17" fill="#e55b28"/></svg>
<div style="position:absolute;left:13.45px;top:350.14px;font-size:14.6px;line-height:1;color:#555;white-space:nowrap;transform-origin:0 0;transform:scaleX(0.9300);">4</div>
<svg style="position:absolute;left:11.8px;top:367.9px;" width="10" height="10" viewBox="0 0 10 10"><polygon points="4.80,0.20 5.92,3.26 9.17,3.38 6.61,5.39 7.50,8.52 4.80,6.70 2.10,8.52 2.99,5.39 0.43,3.38 3.68,3.26" fill="#666"/></svg><div style="position:absolute;left:11.0px;top:371.5px;width:1.6px;height:1px;background:#9a9a9a;"></div>
<div style="position:absolute;left:27px;top:411.5px;width:71px;height:41.5px;background:#fff;border:1px solid #c8c8c8;"></div>
<svg style="position:absolute;left:28.5px;top:412.7px;overflow:hidden;" width="68" height="38.6" viewBox="0 0 820 463"><rect width="820" height="463" fill="#3a2853"/><polygon points="495,0 571,52 699,162 820,0" fill="#44325e"/><polygon points="0,0 485,0 403,218 221,94" fill="#402e5a"/><polygon points="590,0 820,0 820,120 720,50" fill="#6f52a0"/><polygon points="690,0 820,0 820,70" fill="#9b7fc9"/><polygon points="0,400 70,463 0,463" fill="#8460b0"/><circle cx="41" cy="39" r="24" fill="#fff"/><rect x="90" y="32" width="330" height="9" fill="#d2c936"/><text x="110" y="102" font-size="25" font-weight="700" font-family="Liberation Sans" fill="#fff" stroke="#fff" stroke-width="1.6" text-anchor="start">Sequence of</text><text x="110" y="132" font-size="25" font-weight="700" font-family="Liberation Sans" fill="#fff" stroke="#fff" stroke-width="1.6" text-anchor="start">Operation</text><path d="M401 294L256 294A145 145 0 1 1 503 397Z" fill="#b5553a" opacity="0.38" stroke="#e8632c" stroke-width="5"/><path d="M401 294L296 294A105 105 0 0 1 475 220Z" fill="#d98a6a" opacity="0.45" stroke="#e8632c" stroke-width="4"/><path d="M401 294L341 294A60 60 0 0 1 401 234Z" fill="#f0b59c" opacity="0.7"/><path d="M200 215H380M190 345H380M480 262H600" stroke="#fff" stroke-width="7" stroke-dasharray="12 12"/><rect x="600" y="200" width="100" height="11" fill="#fff"/><rect x="600" y="258" width="105" height="13" fill="#fff"/><rect x="600" y="280" width="100" height="7" fill="#9a8db0"/><rect x="80" y="232" width="95" height="10" fill="#e6e0ee"/><rect x="80" y="340" width="95" height="10" fill="#e6e0ee"/><rect x="80" y="378" width="95" height="9" fill="#fff"/><rect x="0" y="449" width="820" height="14" fill="#f2f2f2"/><rect x="694" y="446" width="126" height="17" fill="#e55b28"/></svg>
<div style="position:absolute;left:13.45px;top:410.14px;font-size:14.6px;line-height:1;color:#555;white-space:nowrap;transform-origin:0 0;transform:scaleX(0.9300);">5</div>
<svg style="position:absolute;left:11.8px;top:427.9px;" width="10" height="10" viewBox="0 0 10 10"><polygon points="4.80,0.20 5.92,3.26 9.17,3.38 6.61,5.39 7.50,8.52 4.80,6.70 2.10,8.52 2.99,5.39 0.43,3.38 3.68,3.26" fill="#666"/></svg><div style="position:absolute;left:11.0px;top:431.5px;width:1.6px;height:1px;background:#9a9a9a;"></div>
<div style="position:absolute;left:27px;top:471.5px;width:71px;height:41.5px;background:#fff;border:1px solid #c8c8c8;"></div>
<svg style="position:absolute;left:28.5px;top:472.7px;overflow:hidden;" width="68" height="38.6" viewBox="0 0 820 463"><rect width="820" height="463" fill="#3a2853"/><polygon points="495,0 571,52 699,162 820,0" fill="#44325e"/><polygon points="0,0 485,0 403,218 221,94" fill="#402e5a"/><polygon points="560,0 820,0 820,120 700,45" fill="#6f52a0"/><polygon points="690,0 820,0 820,70" fill="#9b7fc9"/><polygon points="0,330 40,370 0,410" fill="#8460b0"/><circle cx="41" cy="39" r="24" fill="#fff"/><rect x="90" y="32" width="330" height="9" fill="#d2c936"/><text x="110" y="106" font-size="26" font-weight="700" font-family="Liberation Sans" fill="#fff" stroke="#fff" stroke-width="1.6">Where we doing Zones</text><path d="M90 270H730" stroke="#fff" stroke-width="6" stroke-dasharray="12 9"/><circle cx="300" cy="205" r="26" fill="#e8632c"/><circle cx="300" cy="205" r="13" fill="#f6b195"/><path d="M300 230V270" stroke="#e8632c" stroke-width="7"/><rect x="338" y="190" width="95" height="10" fill="#fff"/><rect x="338" y="210" width="80" height="7" fill="#9a8db0"/><circle cx="500" cy="205" r="26" fill="#e8632c"/><circle cx="500" cy="205" r="13" fill="#f6b195"/><path d="M500 230V270" stroke="#e8632c" stroke-width="7"/><rect x="538" y="190" width="95" height="10" fill="#fff"/><rect x="538" y="210" width="80" height="7" fill="#9a8db0"/><circle cx="195" cy="335" r="26" fill="#e8632c"/><circle cx="195" cy="335" r="13" fill="#f6b195"/><path d="M195 270V310" stroke="#e8632c" stroke-width="7"/><rect x="233" y="322" width="95" height="10" fill="#fff"/><rect x="233" y="342" width="80" height="7" fill="#9a8db0"/><circle cx="395" cy="335" r="26" fill="#e8632c"/><circle cx="395" cy="335" r="13" fill="#f6b195"/><path d="M395 270V310" stroke="#e8632c" stroke-width="7"/><rect x="433" y="322" width="95" height="10" fill="#fff"/><rect x="433" y="342" width="80" height="7" fill="#9a8db0"/><circle cx="600" cy="335" r="26" fill="#e8632c"/><circle cx="600" cy="335" r="13" fill="#f6b195"/><path d="M600 270V310" stroke="#e8632c" stroke-width="7"/><rect x="638" y="322" width="95" height="10" fill="#fff"/><rect x="638" y="342" width="80" height="7" fill="#9a8db0"/><rect x="0" y="449" width="820" height="14" fill="#f2f2f2"/><rect x="694" y="446" width="126" height="17" fill="#e55b28"/></svg>
<div style="position:absolute;left:13.45px;top:470.14px;font-size:14.6px;line-height:1;color:#555;white-space:nowrap;transform-origin:0 0;transform:scaleX(0.9300);">6</div>
<svg style="position:absolute;left:11.8px;top:487.9px;" width="10" height="10" viewBox="0 0 10 10"><polygon points="4.80,0.20 5.92,3.26 9.17,3.38 6.61,5.39 7.50,8.52 4.80,6.70 2.10,8.52 2.99,5.39 0.43,3.38 3.68,3.26" fill="#666"/></svg><div style="position:absolute;left:11.0px;top:491.5px;width:1.6px;height:1px;background:#9a9a9a;"></div>
<div style="position:absolute;left:27px;top:531.5px;width:71px;height:41.5px;background:#fff;border:1px solid #c8c8c8;"></div>
<svg style="position:absolute;left:28.5px;top:532.7px;overflow:hidden;" width="68" height="38.6" viewBox="0 0 820 463"><rect width="820" height="463" fill="#3a2853"/><polygon points="495,0 571,52 699,162 820,0" fill="#44325e"/><polygon points="0,0 485,0 403,218 221,94" fill="#402e5a"/><polygon points="560,0 820,0 820,120 700,45" fill="#6f52a0"/><polygon points="690,0 820,0 820,70" fill="#9b7fc9"/><polygon points="0,330 40,370 0,410" fill="#8460b0"/><circle cx="41" cy="39" r="24" fill="#fff"/><rect x="90" y="32" width="330" height="9" fill="#d2c936"/><text x="110" y="106" font-size="26" font-weight="700" font-family="Liberation Sans" fill="#fff" stroke="#fff" stroke-width="1.6">Timeline Continued...</text><path d="M90 270H730" stroke="#fff" stroke-width="6" stroke-dasharray="12 9"/><circle cx="300" cy="205" r="26" fill="#e8632c"/><circle cx="300" cy="205" r="13" fill="#f6b195"/><path d="M300 230V270" stroke="#e8632c" stroke-width="7"/><rect x="338" y="190" width="95" height="10" fill="#fff"/><rect x="338" y="210" width="80" height="7" fill="#9a8db0"/><circle cx="500" cy="205" r="26" fill="#e8632c"/><circle cx="500" cy="205" r="13" fill="#f6b195"/><path d="M500 230V270" stroke="#e8632c" stroke-width="7"/><rect x="538" y="190" width="95" height="10" fill="#fff"/><rect x="538" y="210" width="80" height="7" fill="#9a8db0"/><circle cx="195" cy="335" r="26" fill="#e8632c"/><circle cx="195" cy="335" r="13" fill="#f6b195"/><path d="M195 270V310" stroke="#e8632c" stroke-width="7"/><rect x="233" y="322" width="95" height="10" fill="#fff"/><rect x="233" y="342" width="80" height="7" fill="#9a8db0"/><circle cx="395" cy="335" r="26" fill="#e8632c"/><circle cx="395" cy="335" r="13" fill="#f6b195"/><path d="M395 270V310" stroke="#e8632c" stroke-width="7"/><rect x="433" y="322" width="95" height="10" fill="#fff"/><rect x="433" y="342" width="80" height="7" fill="#9a8db0"/><circle cx="600" cy="335" r="26" fill="#e8632c"/><circle cx="600" cy="335" r="13" fill="#f6b195"/><path d="M600 270V310" stroke="#e8632c" stroke-width="7"/><rect x="638" y="322" width="95" height="10" fill="#fff"/><rect x="638" y="342" width="80" height="7" fill="#9a8db0"/><rect x="0" y="449" width="820" height="14" fill="#f2f2f2"/><rect x="694" y="446" width="126" height="17" fill="#e55b28"/></svg>
<div style="position:absolute;left:13.45px;top:530.14px;font-size:14.6px;line-height:1;color:#555;white-space:nowrap;transform-origin:0 0;transform:scaleX(0.9300);">7</div>
<svg style="position:absolute;left:11.8px;top:547.9px;" width="10" height="10" viewBox="0 0 10 10"><polygon points="4.80,0.20 5.92,3.26 9.17,3.38 6.61,5.39 7.50,8.52 4.80,6.70 2.10,8.52 2.99,5.39 0.43,3.38 3.68,3.26" fill="#666"/></svg><div style="position:absolute;left:11.0px;top:551.5px;width:1.6px;height:1px;background:#9a9a9a;"></div>
<div style="position:absolute;left:27px;top:591.5px;width:71px;height:41.5px;background:#fff;border:1px solid #c8c8c8;"></div>
<svg style="position:absolute;left:28.5px;top:592.7px;overflow:hidden;" width="68" height="38.6" viewBox="0 0 820 463"><rect width="820" height="463" fill="#3a2853"/><polygon points="495,0 571,52 699,162 820,0" fill="#44325e"/><polygon points="0,0 485,0 403,218 221,94" fill="#402e5a"/><polygon points="560,0 820,0 820,120 700,45" fill="#6f52a0"/><polygon points="690,0 820,0 820,70" fill="#9b7fc9"/><circle cx="41" cy="39" r="24" fill="#fff"/><rect x="90" y="32" width="330" height="9" fill="#d2c936"/><text x="110" y="96" font-size="27" font-weight="700" font-family="Liberation Sans" fill="#fff" stroke="#fff" stroke-width="1.6" text-anchor="start">Processes</text><rect x="330" y="84" width="220" height="8" fill="#9a8db0"/><circle cx="170" cy="215" r="52" fill="none" stroke="#d9d2e6" stroke-width="12"/><path d="M170 163A52 52 0 0 1 222 215" fill="none" stroke="#e8632c" stroke-width="12"/><rect x="142" y="205" width="56" height="18" fill="#fff"/><rect x="130" y="318" width="80" height="18" fill="#e6e0ee"/><circle cx="170" cy="385" r="17" fill="#e8632c"/><circle cx="170" cy="385" r="7" fill="#fff"/><circle cx="335" cy="215" r="52" fill="none" stroke="#d9d2e6" stroke-width="12"/><path d="M335 163A52 52 0 0 1 387 215" fill="none" stroke="#e8632c" stroke-width="12"/><rect x="307" y="205" width="56" height="18" fill="#fff"/><rect x="295" y="318" width="80" height="18" fill="#e6e0ee"/><circle cx="335" cy="385" r="17" fill="#e8632c"/><circle cx="335" cy="385" r="7" fill="#fff"/><circle cx="500" cy="215" r="52" fill="none" stroke="#d9d2e6" stroke-width="12"/><path d="M500 163A52 52 0 0 1 552 215" fill="none" stroke="#e8632c" stroke-width="12"/><rect x="472" y="205" width="56" height="18" fill="#fff"/><rect x="460" y="318" width="80" height="18" fill="#e6e0ee"/><circle cx="500" cy="385" r="17" fill="#e8632c"/><circle cx="500" cy="385" r="7" fill="#fff"/><circle cx="665" cy="215" r="52" fill="none" stroke="#d9d2e6" stroke-width="12"/><path d="M665 163A52 52 0 0 1 717 215" fill="none" stroke="#e8632c" stroke-width="12"/><rect x="637" y="205" width="56" height="18" fill="#fff"/><rect x="625" y="318" width="80" height="18" fill="#e6e0ee"/><circle cx="665" cy="385" r="17" fill="#e8632c"/><circle cx="665" cy="385" r="7" fill="#fff"/><rect x="0" y="449" width="820" height="14" fill="#f2f2f2"/><rect x="694" y="446" width="126" height="17" fill="#e55b28"/></svg>
<div style="position:absolute;left:13.45px;top:590.14px;font-size:14.6px;line-height:1;color:#555;white-space:nowrap;transform-origin:0 0;transform:scaleX(0.9300);">8</div>
<svg style="position:absolute;left:11.8px;top:607.9px;" width="10" height="10" viewBox="0 0 10 10"><polygon points="4.80,0.20 5.92,3.26 9.17,3.38 6.61,5.39 7.50,8.52 4.80,6.70 2.10,8.52 2.99,5.39 0.43,3.38 3.68,3.26" fill="#666"/></svg><div style="position:absolute;left:11.0px;top:611.5px;width:1.6px;height:1px;background:#9a9a9a;"></div>
<div style="position:absolute;left:118px;top:155px;width:15px;height:490px;background:#dcdcdc;"></div>
<div style="position:absolute;left:118px;top:155px;width:15px;height:15px;background:#fff;border:1px solid #ababab;"></div>
<svg style="position:absolute;left:122.2px;top:160px;" width="7" height="4" viewBox="0 0 7 4"><path d="M0 4H7L3.5 0Z" fill="#777"/></svg>
<div style="position:absolute;left:118px;top:170px;width:15px;height:305px;background:#fff;border:1px solid #ababab;"></div>
<div style="position:absolute;left:118px;top:630.5px;width:15px;height:14px;background:#fff;border:1px solid #ababab;"></div>
<svg style="position:absolute;left:122.2px;top:636px;" width="7" height="4" viewBox="0 0 7 4"><path d="M0 0H7L3.5 4Z" fill="#777"/></svg>
<div style="position:absolute;left:137px;top:155px;width:1px;height:490px;background:#c2c2c2;"></div>
<!-- part_slide -->
<div style="position:absolute;left:198px;top:159px;width:820px;height:7px;background:#dedede;"></div>
<div style="position:absolute;left:198px;top:629px;width:820px;height:8px;background:#d9d9d9;"></div>
<svg style="position:absolute;left:199px;top:166px;" width="820" height="463" viewBox="0 0 820 463"><defs><linearGradient id="bgg" x1="0" y1="0" x2="0" y2="1"><stop offset="0" stop-color="#3f2d59"/><stop offset="0.55" stop-color="#3b2954"/><stop offset="1" stop-color="#37264f"/></linearGradient></defs><rect x="0" y="0" width="820" height="449" fill="url(#bgg)"/><polygon points="495.0,0.0 571.0,52.0 699.0,162.0 820.0,0.0" fill="#45335f"/><polygon points="485.0,0.0 495.0,0.0 571.0,52.0 575.0,113.0" fill="#43315d"/><polygon points="0.0,0.0 485.0,0.0 316.0,41.0 403.0,218.0 281.0,164.0 0.0,49.0" fill="#402e5a"/><polygon points="316.0,41.0 485.0,0.0 403.0,218.0" fill="#45335f"/><polygon points="485.0,0.0 575.0,113.0 521.0,204.0 403.0,218.0" fill="#3d2b57"/><polygon points="699.0,162.0 820.0,0.0 820.0,274.0 786.0,246.0 691.0,304.0" fill="#3c2a56"/><polygon points="575.0,113.0 699.0,162.0 681.0,334.0 521.0,204.0" fill="#3a2853"/><polygon points="0.0,0.0 221.0,94.0 131.0,134.0 0.0,94.0" fill="#3d2b57"/><polygon points="391.0,308.0 268.0,443.0 262.0,449.0 511.0,449.0" fill="#3a2852"/><polygon points="520.0,204.0 403.0,218.0 361.0,334.0 444.0,350.0" fill="#38264f"/><polygon points="0.0,401.0 16.0,385.0 66.0,449.0 0.0,449.0" fill="#36244d"/><polygon points="16.0,385.0 66.0,449.0 268.0,449.0 268.0,442.0" fill="#8460b0"/><polygon points="391.0,308.0 511.0,449.0 567.0,449.0" fill="#8360af"/><polygon points="520.0,204.0 444.0,350.0 567.0,449.0 595.0,449.0" fill="#2c1c3e"/><polygon points="786.0,246.0 820.0,273.0 820.0,449.0 770.0,449.0 670.0,350.0" fill="#2c1c3e"/><polygon points="520.0,204.0 595.0,449.0 770.0,449.0" fill="#ae97cc"/><rect x="0" y="449" width="820" height="14" fill="#f2f2f2"/><rect x="694" y="449" width="126" height="14" fill="#e55b28"/></svg>
<div style="position:absolute;left:216px;top:180.6px;width:48.6px;height:48.6px;background:#fff;border-radius:50%;"></div>
<div style="position:absolute;left:219.20px;top:197.73px;font-size:14.5px;line-height:1;color:#2b1b40;white-space:nowrap;transform-origin:0 0;transform:scaleX(1.0072);font-weight:700;">LOGO</div>
<div style="position:absolute;left:267.80px;top:241.82px;font-size:51.6px;line-height:1;color:#fff;white-space:nowrap;transform-origin:0 0;">Awesome</div>
<div style="position:absolute;left:266.90px;top:298.02px;font-size:51.6px;line-height:1;color:#fff;white-space:nowrap;transform-origin:0 0;font-weight:700;">Presentation</div>
<div style="position:absolute;left:268.00px;top:353.62px;font-size:51.6px;line-height:1;color:#fff;white-space:nowrap;transform-origin:0 0;">Title Here</div>
<div style="position:absolute;left:268.10px;top:464.94px;font-size:14.6px;line-height:1;color:#fff;white-space:nowrap;transform-origin:0 0;transform:scaleX(0.9230);-webkit-text-stroke:0.3px #fff;">Lorem</div>
<div style="position:absolute;left:314.90px;top:464.94px;font-size:14.6px;line-height:1;color:#fff;white-space:nowrap;transform-origin:0 0;transform:scaleX(0.9500);-webkit-text-stroke:0.3px #fff;">ipsum</div>
<div style="position:absolute;left:358.00px;top:464.94px;font-size:14.6px;line-height:1;color:#fff;white-space:nowrap;transform-origin:0 0;transform:scaleX(1.0780);-webkit-text-stroke:0.3px #fff;">dolor</div>
<div style="position:absolute;left:397.50px;top:464.94px;font-size:14.6px;line-height:1;color:#fff;white-space:nowrap;transform-origin:0 0;transform:scaleX(1.0685);-webkit-text-stroke:0.3px #fff;">sit</div>
<div style="position:absolute;left:416.90px;top:464.94px;font-size:14.6px;line-height:1;color:#fff;white-space:nowrap;transform-origin:0 0;-webkit-text-stroke:0.3px #fff;">amet,</div>
<div style="position:absolute;left:455.30px;top:464.94px;font-size:14.6px;line-height:1;color:#fff;white-space:nowrap;transform-origin:0 0;transform:scaleX(0.9904);-webkit-text-stroke:0.3px #fff;">omnes</div>
<div style="position:absolute;left:268.10px;top:483.94px;font-size:14.6px;line-height:1;color:#fff;white-space:nowrap;transform-origin:0 0;transform:scaleX(1.0364);-webkit-text-stroke:0.3px #fff;">volutpat</div>
<div style="position:absolute;left:325.20px;top:483.94px;font-size:14.6px;line-height:1;color:#fff;white-space:nowrap;transform-origin:0 0;transform:scaleX(1.0246);-webkit-text-stroke:0.3px #fff;">ex</div>
<div style="position:absolute;left:345.00px;top:483.94px;font-size:14.6px;line-height:1;color:#fff;white-space:nowrap;transform-origin:0 0;transform:scaleX(0.8298);-webkit-text-stroke:0.3px #fff;">sed,</div>
<div style="position:absolute;left:372.90px;top:483.94px;font-size:14.6px;line-height:1;color:#fff;white-space:nowrap;transform-origin:0 0;transform:scaleX(1.0538);-webkit-text-stroke:0.3px #fff;">mediocrem</div>
<div style="position:absolute;left:268.10px;top:503.94px;font-size:14.6px;line-height:1;color:#fff;white-space:nowrap;transform-origin:0 0;transform:scaleX(0.9631);-webkit-text-stroke:0.3px #fff;">maiestatis</div>
<div style="position:absolute;left:335.40px;top:503.94px;font-size:14.6px;line-height:1;color:#fff;white-space:nowrap;transform-origin:0 0;transform:scaleX(1.0073);-webkit-text-stroke:0.3px #fff;">ius</div>
<div style="position:absolute;left:358.00px;top:503.94px;font-size:14.6px;line-height:1;color:#fff;white-space:nowrap;transform-origin:0 0;transform:scaleX(1.0296);-webkit-text-stroke:0.3px #fff;">in</div>
<div style="position:absolute;left:374.20px;top:503.94px;font-size:14.6px;line-height:1;color:#fff;white-space:nowrap;transform-origin:0 0;transform:scaleX(1.0110);-webkit-text-stroke:0.3px #fff;">ullamcorper.</div>
<svg style="position:absolute;left:268.7px;top:496.6px;" width="51.80000000000001" height="3" viewBox="0 0 51.80000000000001 3"><path d="M0 1.6L1.5 0.4L3.0 2.2L4.5 0.4L6.0 2.2L7.5 0.4L9.0 2.2L10.5 0.4L12.0 2.2L13.5 0.4L15.0 2.2L16.5 0.4L18.0 2.2L19.5 0.4L21.0 2.2L22.5 0.4L24.0 2.2L25.5 0.4L27.0 2.2L28.5 0.4L30.0 2.2L31.5 0.4L33.0 2.2L34.5 0.4L36.0 2.2L37.5 0.4L39.0 2.2L40.5 0.4L42.0 2.2L43.5 0.4L45.0 2.2L46.5 0.4L48.0 2.2L49.5 0.4L51.0 2.2L52.5 0.4" fill="none" stroke="#e8413a" stroke-width="1.1"/></svg>
<svg style="position:absolute;left:345.6px;top:496.6px;" width="21.69999999999999" height="3" viewBox="0 0 21.69999999999999 3"><path d="M0 1.6L1.5 0.4L3.0 2.2L4.5 0.4L6.0 2.2L7.5 0.4L9.0 2.2L10.5 0.4L12.0 2.2L13.5 0.4L15.0 2.2L16.5 0.4L18.0 2.2L19.5 0.4L21.0 2.2L22.5 0.4" fill="none" stroke="#e8413a" stroke-width="1.1"/></svg>
<svg style="position:absolute;left:373.5px;top:496.6px;" width="74.89999999999998" height="3" viewBox="0 0 74.89999999999998 3"><path d="M0 1.6L1.5 0.4L3.0 2.2L4.5 0.4L6.0 2.2L7.5 0.4L9.0 2.2L10.5 0.4L12.0 2.2L13.5 0.4L15.0 2.2L16.5 0.4L18.0 2.2L19.5 0.4L21.0 2.2L22.5 0.4L24.0 2.2L25.5 0.4L27.0 2.2L28.5 0.4L30.0 2.2L31.5 0.4L33.0 2.2L34.5 0.4L36.0 2.2L37.5 0.4L39.0 2.2L40.5 0.4L42.0 2.2L43.5 0.4L45.0 2.2L46.5 0.4L48.0 2.2L49.5 0.4L51.0 2.2L52.5 0.4L54.0 2.2L55.5 0.4L57.0 2.2L58.5 0.4L60.0 2.2L61.5 0.4L63.0 2.2L64.5 0.4L66.0 2.2L67.5 0.4L69.0 2.2L70.5 0.4L72.0 2.2L73.5 0.4L75.0 2.2" fill="none" stroke="#e8413a" stroke-width="1.1"/></svg>
<svg style="position:absolute;left:268.7px;top:516.2px;" width="62.10000000000002" height="3" viewBox="0 0 62.10000000000002 3"><path d="M0 1.6L1.5 0.4L3.0 2.2L4.5 0.4L6.0 2.2L7.5 0.4L9.0 2.2L10.5 0.4L12.0 2.2L13.5 0.4L15.0 2.2L16.5 0.4L18.0 2.2L19.5 0.4L21.0 2.2L22.5 0.4L24.0 2.2L25.5 0.4L27.0 2.2L28.5 0.4L30.0 2.2L31.5 0.4L33.0 2.2L34.5 0.4L36.0 2.2L37.5 0.4L39.0 2.2L40.5 0.4L42.0 2.2L43.5 0.4L45.0 2.2L46.5 0.4L48.0 2.2L49.5 0.4L51.0 2.2L52.5 0.4L54.0 2.2L55.5 0.4L57.0 2.2L58.5 0.4L60.0 2.2L61.5 0.4L63.0 2.2" fill="none" stroke="#e8413a" stroke-width="1.1"/></svg>
<svg style="position:absolute;left:336px;top:516.2px;" width="17.600000000000023" height="3" viewBox="0 0 17.600000000000023 3"><path d="M0 1.6L1.5 0.4L3.0 2.2L4.5 0.4L6.0 2.2L7.5 0.4L9.0 2.2L10.5 0.4L12.0 2.2L13.5 0.4L15.0 2.2L16.5 0.4L18.0 2.2" fill="none" stroke="#e8413a" stroke-width="1.1"/></svg>
<svg style="position:absolute;left:374.8px;top:516.2px;" width="79.19999999999999" height="3" viewBox="0 0 79.19999999999999 3"><path d="M0 1.6L1.5 0.4L3.0 2.2L4.5 0.4L6.0 2.2L7.5 0.4L9.0 2.2L10.5 0.4L12.0 2.2L13.5 0.4L15.0 2.2L16.5 0.4L18.0 2.2L19.5 0.4L21.0 2.2L22.5 0.4L24.0 2.2L25.5 0.4L27.0 2.2L28.5 0.4L30.0 2.2L31.5 0.4L33.0 2.2L34.5 0.4L36.0 2.2L37.5 0.4L39.0 2.2L40.5 0.4L42.0 2.2L43.5 0.4L45.0 2.2L46.5 0.4L48.0 2.2L49.5 0.4L51.0 2.2L52.5 0.4L54.0 2.2L55.5 0.4L57.0 2.2L58.5 0.4L60.0 2.2L61.5 0.4L63.0 2.2L64.5 0.4L66.0 2.2L67.5 0.4L69.0 2.2L70.5 0.4L72.0 2.2L73.5 0.4L75.0 2.2L76.5 0.4L78.0 2.2L79.5 0.4" fill="none" stroke="#e8413a" stroke-width="1.1"/></svg>
<div style="position:absolute;left:905.00px;top:617.50px;font-size:10.4px;line-height:1;color:#fff;white-space:nowrap;transform-origin:0 0;-webkit-text-stroke:0.25px #fff;">www.yourwebsite.com</div>
<svg style="position:absolute;left:905px;top:626px;" width="103" height="3" viewBox="0 0 103 3"><path d="M0 1.6L1.5 0.4L3.0 2.2L4.5 0.4L6.0 2.2L7.5 0.4L9.0 2.2L10.5 0.4L12.0 2.2L13.5 0.4L15.0 2.2L16.5 0.4L18.0 2.2L19.5 0.4L21.0 2.2L22.5 0.4L24.0 2.2L25.5 0.4L27.0 2.2L28.5 0.4L30.0 2.2L31.5 0.4L33.0 2.2L34.5 0.4L36.0 2.2L37.5 0.4L39.0 2.2L40.5 0.4L42.0 2.2L43.5 0.4L45.0 2.2L46.5 0.4L48.0 2.2L49.5 0.4L51.0 2.2L52.5 0.4L54.0 2.2L55.5 0.4L57.0 2.2L58.5 0.4L60.0 2.2L61.5 0.4L63.0 2.2L64.5 0.4L66.0 2.2L67.5 0.4L69.0 2.2L70.5 0.4L72.0 2.2L73.5 0.4L75.0 2.2L76.5 0.4L78.0 2.2L79.5 0.4L81.0 2.2L82.5 0.4L84.0 2.2L85.5 0.4L87.0 2.2L88.5 0.4L90.0 2.2L91.5 0.4L93.0 2.2L94.5 0.4L96.0 2.2L97.5 0.4L99.0 2.2L100.5 0.4L102.0 2.2L103.5 0.4" fill="none" stroke="#c9261c" stroke-width="1.1"/></svg>
<!-- part_status -->
<div style="position:absolute;left:140px;top:644px;width:938px;height:1px;background:#c2c2c2;"></div>
<div style="position:absolute;left:0px;top:647px;width:1095px;height:1px;background:#cdcdcd;"></div>
<div style="position:absolute;left:0px;top:648px;width:1095px;height:20px;background:#f1f1f1;"></div>
<div style="position:absolute;left:8.20px;top:651.89px;font-size:12.3px;line-height:1;color:#444;white-space:nowrap;transform-origin:0 0;transform:scaleX(0.9154);">Slide 1 of 12</div>
<svg style="position:absolute;left:91px;top:650.6px;" width="15" height="14" viewBox="0 0 15 14"><path d="M6.4 2.2C4.6 0.8 2.4 0.8 0.6 1.4V10.6C2.4 10 4.6 10 6.4 11.6M6.4 2.2V12.8M6.4 2.2C7.4 1.4 8.4 1 9.4 0.9" fill="none" stroke="#555" stroke-width="1"/><path d="M9.2 3.4L13.6 8.6M13.6 3.4L9.2 8.6" stroke="#555" stroke-width="1.3"/></svg>
<svg style="position:absolute;left:577.6px;top:651.4px;" width="12" height="13" viewBox="0 0 12 13"><path d="M3.6 3.4L6 0.6L8.4 3.4Z" fill="#666"/><path d="M0.4 5.6H11.4M0.4 8.4H11.4M0.4 11.2H8" stroke="#666" stroke-width="1"/></svg>
<div style="position:absolute;left:594.20px;top:651.89px;font-size:12.3px;line-height:1;color:#444;white-space:nowrap;transform-origin:0 0;transform:scaleX(0.9212);">Notes</div>
<svg style="position:absolute;left:645.2px;top:652px;" width="12" height="12" viewBox="0 0 12 12"><path d="M0.3 0.2H11.7V9.2H7L4.8 12V9.2H0.3Z" fill="#707070"/></svg>
<div style="position:absolute;left:661.30px;top:651.89px;font-size:12.3px;line-height:1;color:#444;white-space:nowrap;transform-origin:0 0;transform:scaleX(0.8980);">Comments</div>
<div style="position:absolute;left:734px;top:648px;width:38px;height:20px;background:#c6c6c6;"></div>
<svg style="position:absolute;left:746.2px;top:651px;" width="15" height="14" viewBox="0 0 15 14"><rect x="0.5" y="0.5" width="13.4" height="12.4" fill="none" stroke="#555" stroke-width="1"/><path d="M3.6 0.5V12.9" stroke="#555" stroke-width="1"/><rect x="5.6" y="2.6" width="6.2" height="4" fill="none" stroke="#555" stroke-width="1"/><rect x="4.1" y="9" width="9.4" height="3.4" fill="#9a9a9a"/></svg>
<svg style="position:absolute;left:784.2px;top:651px;" width="15" height="14" viewBox="0 0 15 14"><rect x="0.5" y="0.9" width="5" height="3.4" fill="none" stroke="#555" stroke-width="1"/><rect x="0.5" y="8.9" width="5" height="3.4" fill="none" stroke="#555" stroke-width="1"/><rect x="8.5" y="0.9" width="5" height="3.4" fill="none" stroke="#555" stroke-width="1"/><rect x="8.5" y="8.9" width="5" height="3.4" fill="none" stroke="#555" stroke-width="1"/></svg>
<svg style="position:absolute;left:822.2px;top:651px;" width="13" height="14" viewBox="0 0 13 14"><path d="M6.4 1.8C4.6 0.4 2.4 0.4 0.6 1V10.4C2.4 9.8 4.6 9.8 6.4 11.2C8.2 9.8 10.4 9.8 12.2 10.4V1C10.4 0.4 8.2 0.4 6.4 1.8ZM6.4 1.8V13" fill="none" stroke="#555" stroke-width="1"/><path d="M2 3.4H5M2 5.4H5M2 7.4H5M7.8 3.4H10.8M7.8 5.4H10.8M7.8 7.4H10.8" stroke="#555" stroke-width="0.8"/></svg>
<svg style="position:absolute;left:859.6px;top:651.4px;" width="13" height="13" viewBox="0 0 13 13"><path d="M0 1.2H12.8" stroke="#555" stroke-width="2"/><path d="M1.8 2V7.6H11V2" fill="none" stroke="#555" stroke-width="1"/><path d="M6.3 7.4V11M3.4 11.6H9.2" stroke="#555" stroke-width="1.2"/></svg>
<div style="position:absolute;left:891px;top:656.6px;width:6.4px;height:2px;background:#555;"></div>
<div style="position:absolute;left:901px;top:657.2px;width:100px;height:1px;background:#8a8a8a;"></div>
<div style="position:absolute;left:951px;top:655px;width:1px;height:5px;background:#8a8a8a;"></div>
<div style="position:absolute;left:942px;top:652px;width:3.8px;height:11px;background:#555;"></div>
<div style="position:absolute;left:1005px;top:656.6px;width:8.2px;height:2px;background:#555;"></div>
<div style="position:absolute;left:1008.1px;top:653.5px;width:2px;height:8.2px;background:#555;"></div>
<div style="position:absolute;left:1028.00px;top:651.89px;font-size:12.3px;line-height:1;color:#444;white-space:nowrap;transform-origin:0 0;transform:scaleX(0.8611);">86%</div>
<svg style="position:absolute;left:1063px;top:652px;" width="13" height="13" viewBox="0 0 13 13"><rect x="0.5" y="0.5" width="12" height="12" fill="none" stroke="#555" stroke-width="1"/><path d="M3 4.4H5.4M4.2 3.2V5.6M7.6 4.4H10M8.8 3.2V5.6M3 8.8H5.4M4.2 7.6V10M7.6 8.8H10M8.8 7.6V10" stroke="#555" stroke-width="0.9"/></svg>
<div style="position:absolute;left:1078px;top:155px;width:15px;height:432px;background:#dcdcdc;"></div>
<div style="position:absolute;left:1078px;top:155px;width:15px;height:15px;background:#fff;border:1px solid #ababab;"></div>
<svg style="position:absolute;left:1082.2px;top:160px;" width="7" height="4" viewBox="0 0 7 4"><path d="M0 4H7L3.5 0Z" fill="#777"/></svg>
<div style="position:absolute;left:1078px;top:182px;width:15px;height:30px;background:#fff;border:1px solid #ababab;"></div>
<div style="position:absolute;left:1078px;top:573px;width:15px;height:14.5px;background:#fff;border:1px solid #ababab;"></div>
<svg style="position:absolute;left:1082.2px;top:578.6px;" width="7" height="4" viewBox="0 0 7 4"><path d="M0 0H7L3.5 4Z" fill="#777"/></svg>
<svg style="position:absolute;left:1082px;top:593px;" width="8" height="9" viewBox="0 0 8 9"><path d="M0 4H7.4L3.7 0Z M0 8.6H7.4L3.7 4.6Z" fill="#666"/><path d="M0 4.2H7.4M0 8.6H7.4" stroke="#666" stroke-width="0.8"/></svg>
<svg style="position:absolute;left:1082px;top:610.6px;" width="8" height="9" viewBox="0 0 8 9"><path d="M0 0H7.4L3.7 4Z M0 4.6H7.4L3.7 8.6Z" fill="#666"/><path d="M0 0.2H7.4M0 4.6H7.4" stroke="#666" stroke-width="0.8"/></svg>
<!-- part_title -->
<div style="position:absolute;left:0px;top:0px;width:1095px;height:60px;background:#b7472a;"></div>
<div style="position:absolute;left:64px;top:36px;width:60px;height:25px;background:#f1f1f1;"></div>
<svg style="position:absolute;left:23px;top:9px;" width="14" height="14" viewBox="0 0 14 14"><rect x="0.9" y="0.9" width="12.2" height="12.2" fill="none" stroke="#fff" stroke-width="1.8"/><rect x="1" y="6.3" width="12" height="1.6" fill="#fff"/><path d="M2.8 8.4H11.4V13.6H7.4V10.8H5V13.6H2.8Z" fill="#fff"/></svg>
<svg style="position:absolute;left:51px;top:8px;" width="16" height="15" viewBox="0 0 16 15"><path d="M1.9 5.5H9.2A4.2 4.2 0 0 1 9.2 13.9H7.4" fill="none" stroke="#fff" stroke-width="1.9"/><path d="M5.8 1.5L1.8 5.5L5.8 9.5" fill="none" stroke="#fff" stroke-width="1.9"/></svg>
<svg style="position:absolute;left:72.0px;top:14.5px;" width="5" height="2.6" viewBox="0 0 5 2.6"><path d="M0 0H5L2.5 2.6Z" fill="#fff"/></svg>
<svg style="position:absolute;left:86px;top:8px;" width="16" height="15" viewBox="0 0 16 15"><path d="M4.2 3.6A5.5 5.5 0 1 0 11.6 3.6" fill="none" stroke="#fff" stroke-width="1.9"/><path d="M7.8 1.8H12.4V6.4" fill="none" stroke="#fff" stroke-width="1.9"/></svg>
<svg style="position:absolute;left:114px;top:8px;" width="19" height="17" viewBox="0 0 19 17"><path d="M0.9 1.8H17" stroke="#fff" stroke-width="1.9"/><path d="M3.4 2V10.4H7" fill="none" stroke="#fff" stroke-width="1.3"/><circle cx="12.5" cy="8.5" r="3.9" fill="none" stroke="#fff" stroke-width="1.2"/><path d="M11.3 6.4L14.5 8.5L11.3 10.6Z" fill="#fff"/><path d="M9.9 12.2L10.8 15M4 15.4H14" stroke="#fff" stroke-width="1.2"/></svg>
<svg style="position:absolute;left:149px;top:14px;" width="6" height="8" viewBox="0 0 6 8"><path d="M0 1.5H5.4" stroke="#fff" stroke-width="1"/><path d="M0 4H5.4L2.7 7.2Z" fill="#fff"/></svg>
<div style="position:absolute;left:432.00px;top:14.14px;font-size:12px;line-height:1;color:#fff;white-space:nowrap;transform-origin:0 0;transform:scaleX(0.9585);">poly_peaks_design_21198.pptx - PowerPoint</div>
<svg style="position:absolute;left:926px;top:11px;" width="14" height="11" viewBox="0 0 14 11"><rect x="0.5" y="0.5" width="12.5" height="9.5" fill="none" stroke="#fff" stroke-width="1"/><path d="M0.5 2.5H13" stroke="#fff" stroke-width="1"/><path d="M6.75 8.5V4.6M4.6 6.6L6.75 4.4L8.9 6.6" fill="none" stroke="#fff" stroke-width="1"/></svg>
<div style="position:absolute;left:974.5px;top:15.5px;width:10.5px;height:1px;background:#fff;"></div>
<svg style="position:absolute;left:1020px;top:11px;" width="11" height="11" viewBox="0 0 11 11"><rect x="0.6" y="0.6" width="9.3" height="9.3" fill="none" stroke="#fff" stroke-width="1.1"/></svg>
<svg style="position:absolute;left:1065px;top:10.5px;" width="12" height="12" viewBox="0 0 12 12"><path d="M0.7 0.7L10.8 10.8M10.8 0.7L0.7 10.8" stroke="#fff" stroke-width="1.1"/></svg>
<div style="position:absolute;left:21.20px;top:42.89px;font-size:12.3px;line-height:1;color:#fff;white-space:nowrap;transform-origin:0 0;transform:scaleX(0.9233);">File</div>
<div style="position:absolute;left:138.50px;top:41.89px;font-size:12.3px;line-height:1;color:#fff;white-space:nowrap;transform-origin:0 0;transform:scaleX(0.9655);">Insert</div>
<div style="position:absolute;left:196.80px;top:41.89px;font-size:12.3px;line-height:1;color:#fff;white-space:nowrap;transform-origin:0 0;transform:scaleX(0.9402);">Design</div>
<div style="position:absolute;left:261.80px;top:41.89px;font-size:12.3px;line-height:1;color:#fff;white-space:nowrap;transform-origin:0 0;transform:scaleX(0.9832);">Transitions</div>
<div style="position:absolute;left:348.50px;top:41.89px;font-size:12.3px;line-height:1;color:#fff;white-space:nowrap;transform-origin:0 0;transform:scaleX(1.0189);">Animations</div>
<div style="position:absolute;left:438.50px;top:41.89px;font-size:12.3px;line-height:1;color:#fff;white-space:nowrap;transform-origin:0 0;transform:scaleX(0.9425);">Slide Show</div>
<div style="position:absolute;left:524.80px;top:41.89px;font-size:12.3px;line-height:1;color:#fff;white-space:nowrap;transform-origin:0 0;transform:scaleX(0.9273);">Review</div>
<div style="position:absolute;left:590.20px;top:41.89px;font-size:12.3px;line-height:1;color:#fff;white-space:nowrap;transform-origin:0 0;transform:scaleX(0.9947);">View</div>
<div style="position:absolute;left:644.50px;top:41.89px;font-size:12.3px;line-height:1;color:#fff;white-space:nowrap;transform-origin:0 0;transform:scaleX(0.9374);">ShapeChef</div>
<div style="position:absolute;left:76.80px;top:41.89px;font-size:12.3px;line-height:1;color:#b7472a;white-space:nowrap;transform-origin:0 0;transform:scaleX(1.0210);">Home</div>
<svg style="position:absolute;left:731px;top:39.5px;" width="12" height="16" viewBox="0 0 12 16"><path d="M3.6 10.2C3.6 8.6 1.4 7.7 1.4 5.2A4.4 4.4 0 0 1 10.2 5.2C10.2 7.7 8 8.6 8 10.2Z" fill="none" stroke="#fff" stroke-width="1.1"/><path d="M3.6 12H8M4 14H7.6" stroke="#fff" stroke-width="1.4"/></svg>
<div style="position:absolute;left:748.20px;top:41.89px;font-size:12.3px;line-height:1;color:#fbe9e4;white-space:nowrap;transform-origin:0 0;transform:scaleX(0.9875);">Tell me what you want to do...</div>
<div style="position:absolute;left:935.00px;top:41.89px;font-size:12.3px;line-height:1;color:#fff;white-space:nowrap;transform-origin:0 0;transform:scaleX(0.9347);">Farshad Iqbal</div>
<div style="position:absolute;left:1015px;top:36px;width:63px;height:23px;background:#8f3620;"></div>
<svg style="position:absolute;left:1021.5px;top:40px;" width="16" height="15" viewBox="0 0 16 15"><circle cx="6.6" cy="4.7" r="3.5" fill="none" stroke="#fff" stroke-width="1.4"/><path d="M0.8 13.6C1.4 10.4 3.2 8.7 6 8.5" fill="none" stroke="#fff" stroke-width="1.4"/><path d="M11 8.2V14.4M7.9 11.3H14.1" stroke="#fff" stroke-width="1.4"/></svg>
<div style="position:absolute;left:1040.70px;top:41.89px;font-size:12.3px;line-height:1;color:#fff;white-space:nowrap;transform-origin:0 0;transform:scaleX(0.9079);">Share</div>
<!-- part_frame -->
<div style="position:absolute;left:0px;top:668px;width:1095px;height:2px;background:#b7472a;"></div>
<div style="position:absolute;left:0px;top:0px;width:1px;height:670px;background:#b13f22;"></div>
<div style="position:absolute;left:1094px;top:0px;width:1px;height:670px;background:#b13f22;"></div>
</div>
</body>
</html>
